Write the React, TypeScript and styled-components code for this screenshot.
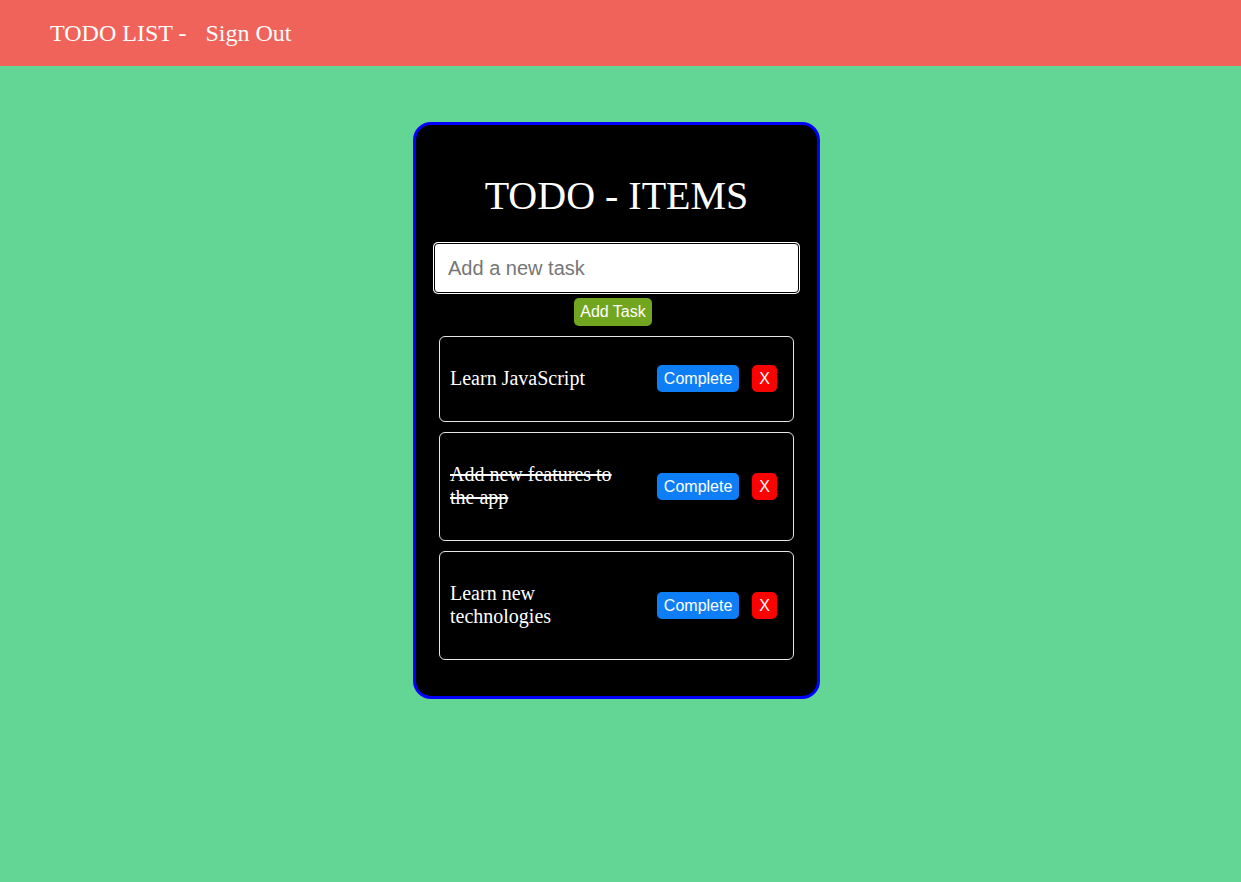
import React from "react";
import styled, { createGlobalStyle } from "styled-components";

const GlobalStyle = createGlobalStyle`
  html, body {
    margin: 0;
    padding: 0;
    background: #63d595;
    font-family: "Liberation Serif", "Times New Roman", serif;
  }
`;

const Page = styled.div`
  min-height: 882px;
  background: #63d595;
`;

const Header = styled.header`
  height: 66px;
  background: #f0635a;
  display: flex;
  align-items: center;
  padding-left: 50px;
  color: #fff;
  font-family: "Liberation Serif", "Times New Roman", serif;
  font-size: 24px;
`;

const Brand = styled.span``;

const SignOut = styled.span`
  margin-left: 19px;
  cursor: pointer;
`;

const Main = styled.main`
  display: flex;
  justify-content: center;
  padding-top: 56px;
  padding-right: 8px;
`;

const Card = styled.section`
  box-sizing: border-box;
  width: 407px;
  background: #000;
  border: 3px solid #0000ff;
  border-radius: 18px;
  padding: 0 18px 36px;
  display: flex;
  flex-direction: column;
`;

const Title = styled.h1`
  margin: 48px 0 24px;
  font-family: "Liberation Serif", "Times New Roman", serif;
  font-weight: normal;
  font-size: 40px;
  line-height: 46px;
  color: #fff;
  text-align: center;
`;

const Input = styled.input`
  box-sizing: border-box;
  width: 100%;
  height: 50px;
  border: 1px solid #000;
  border-radius: 4px;
  box-shadow: 0 0 0 1px #fff;
  background: #fff;
  padding: 0 13px;
  font-family: "Liberation Sans", Arial, sans-serif;
  font-size: 20px;
  color: #222;
  outline: none;
  &::placeholder {
    color: #767676;
  }
`;

const AddButton = styled.button`
  align-self: center;
  margin: 5px 7px 10px 0;
  padding: 5px 6px;
  border: none;
  border-radius: 5px;
  background: #72a520;
  color: #fff;
  font-family: "Liberation Sans", Arial, sans-serif;
  font-size: 16px;
  line-height: 18px;
  cursor: pointer;
`;

const List = styled.ul`
  list-style: none;
  margin: 0;
  padding: 0 5px;
  display: flex;
  flex-direction: column;
  gap: 10px;
`;

const Item = styled.li`
  display: flex;
  align-items: center;
  border: 1px solid #e6e6e6;
  border-radius: 6px;
  padding: 10px 16px 10px 10px;
`;

const ItemText = styled.p<{ $done?: boolean }>`
  flex: 1;
  max-width: 180px;
  margin: 20px 0;
  color: #fff;
  font-family: "Liberation Serif", "Times New Roman", serif;
  font-size: 20px;
  line-height: 23.5px;
  text-decoration: ${(p) => (p.$done ? "line-through" : "none")};
`;

const Actions = styled.div`
  margin-left: auto;
  display: flex;
  align-items: center;
  gap: 13px;
`;

const ActionButton = styled.button<{ $variant: "complete" | "delete" }>`
  border: none;
  border-radius: 5px;
  padding: 4px 7px;
  background: ${(p) => (p.$variant === "complete" ? "#0e7ef6" : "#ff0000")};
  color: #fff;
  font-family: "Liberation Sans", Arial, sans-serif;
  font-size: 16px;
  line-height: 19px;
  cursor: pointer;
`;

const tasks = [
  { text: "Learn JavaScript", done: false },
  { text: "Add new features to the app", done: true },
  { text: "Learn new technologies", done: false },
];

export default function App() {
  return (
    <>
      <GlobalStyle />
      <Page>
        <Header>
          <Brand>TODO LIST -</Brand>
          <SignOut>Sign Out</SignOut>
        </Header>
        <Main>
          <Card>
            <Title>TODO - ITEMS</Title>
            <Input placeholder="Add a new task" />
            <AddButton>Add Task</AddButton>
            <List>
              {tasks.map((t) => (
                <Item key={t.text}>
                  <ItemText $done={t.done}>{t.text}</ItemText>
                  <Actions>
                    <ActionButton $variant="complete">Complete</ActionButton>
                    <ActionButton $variant="delete">X</ActionButton>
                  </Actions>
                </Item>
              ))}
            </List>
          </Card>
        </Main>
      </Page>
    </>
  );
}
